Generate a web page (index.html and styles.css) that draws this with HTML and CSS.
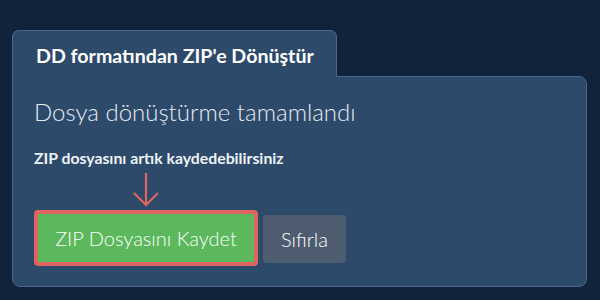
FILE: index.html
```html
<!DOCTYPE html>
<html lang="tr">
<head>
<meta charset="utf-8">
<link rel="stylesheet" href="styles.css">
</head>
<body>
<div class="wrap">
  <div class="tab">DD formatından ZIP'e Dönüştür</div>
  <div class="panel">
    <h1 class="title">Dosya dönüştürme tamamlandı</h1>
    <p class="note">ZIP dosyasını artık kaydedebilirsiniz</p>
    <div class="actions">
      <div class="save-col">
        <svg class="arrow" width="28" height="36" viewBox="0 0 28 36">
          <path d="M14 1 V33 M2 21 L14 33 L26 21" fill="none" stroke="#de6460" stroke-width="2.2"/>
        </svg>
        <button class="btn btn-save">ZIP Dosyasını Kaydet</button>
      </div>
      <button class="btn btn-reset">Sıfırla</button>
    </div>
  </div>
</div>
</body>
</html>
```
FILE: styles.css
```css
html, body {
  margin: 0;
  padding: 0;
  background: #10233a;
  width: 600px;
  height: 300px;
  overflow: hidden;
  font-family: Lato, "Noto Sans", sans-serif;
}
.wrap {
  padding: 30px 13px 0 12px;
}
.tab {
  position: relative;
  z-index: 1;
  display: inline-block;
  box-sizing: border-box;
  width: 325px;
  height: 47px;
  margin-bottom: -1px;
  padding: 13px 0 0 23px;
  background: #2d4a6b;
  border: 1px solid #4b6688;
  border-bottom: none;
  border-radius: 7px 7px 0 0;
  color: #ffffff;
  font-weight: 700;
  font-size: 19.6px;
  line-height: 24px;
}
.panel {
  box-sizing: border-box;
  height: 211px;
  background: #2d4a6b;
  border: 1px solid #4b6688;
  border-radius: 0 8px 8px 8px;
  padding: 20px 0 0 21px;
}
.title {
  margin: 0;
  font-weight: 300;
  font-size: 24px;
  line-height: 30px;
  color: #e4eaf1;
}
.note {
  margin: 21px 0 0 0;
  font-weight: 700;
  font-size: 15.8px;
  line-height: 20px;
  color: #eef2f6;
}
.actions {
  display: flex;
  align-items: flex-end;
  gap: 5px;
}
.save-col {
  display: flex;
  flex-direction: column;
  align-items: center;
}
.arrow {
  display: block;
  margin: 4px 0 2px 0;
}
.btn {
  font-family: Lato, "Noto Sans", sans-serif;
  font-size: 20px;
  font-weight: 300;
  color: #ffffff;
  border: none;
  cursor: pointer;
}
.btn-save {
  box-sizing: border-box;
  width: 224px;
  height: 56px;
  background: #5cb85c;
  border: 4px solid #de6460;
  border-radius: 4px;
  padding: 0;
}
.btn-reset {
  box-sizing: border-box;
  width: 83px;
  height: 48px;
  margin-bottom: 3px;
  background: #4d5d6f;
  border-radius: 4px;
  padding: 0;
}
```
